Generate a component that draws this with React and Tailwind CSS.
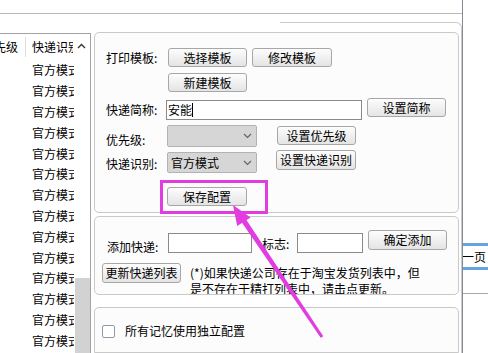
import React from "react";

const Btn = ({ className = "", children }) => (
  <div
    className={`flex items-center justify-center shrink-0 border border-[#a7a7a7] rounded-[3px] bg-linear-to-b from-[#fdfdfd] to-[#e4e4e4] whitespace-nowrap ${className}`}
  >
    {children}
  </div>
);

const Chevron = () => (
  <svg width="9" height="6" viewBox="0 0 9 6" className="shrink-0">
    <polyline points="1,1 4.5,4.5 8,1" fill="none" stroke="#606060" strokeWidth="1.1" />
  </svg>
);

const Select = ({ className = "", children }) => (
  <div
    className={`flex items-center justify-between shrink-0 border border-[#b3b3b3] rounded-[2px] bg-[#d6d6d6] pl-[3px] pr-[4px] ${className}`}
  >
    <span className="whitespace-nowrap">{children}</span>
    <Chevron />
  </div>
);

export default function App() {
  const rows = Array.from({ length: 14 });
  return (
    <div className="relative w-[488px] h-[353px] overflow-hidden bg-white text-[12px] leading-[14px] text-black font-['Noto_Sans_CJK_SC','Noto_Sans',sans-serif] flex">
      {/* main area */}
      <div className="w-[462px] h-full flex flex-col shrink-0">
        <div className="h-[14px] shrink-0 border-b border-[#b9b9b9]" />
        <div className="flex-1 flex min-h-0">
          {/* left list */}
          <div className="w-[91px] shrink-0 mt-[19px] border-t border-r border-[#a3a3a3] flex flex-col">
            <div className="h-[26px] shrink-0 flex items-center">
              <div className="w-[25px] shrink-0 overflow-hidden flex justify-end pr-[7px] whitespace-nowrap">
                <span className="shrink-0">优先级</span>
              </div>
              <div className="w-px h-[20px] bg-[#dcdcdc] shrink-0" />
              <div className="w-[47px] shrink-0 overflow-hidden whitespace-nowrap pl-[6px]">快递识别</div>
              <svg width="9" height="6" viewBox="0 0 9 6" className="ml-[4px] shrink-0 -mt-[2px]">
                <polyline points="1,5 4.5,1.5 8,5" fill="none" stroke="#303030" strokeWidth="1.3" />
              </svg>
            </div>
            <div className="flex-1 flex min-h-0">
              <div className="w-[75px] shrink-0 flex flex-col">
                {rows.map((_, i) => (
                  <div key={i} className="h-[20.8px] shrink-0 flex items-center">
                    <div className="w-[26px] shrink-0" />
                    <div className="w-[48px] overflow-hidden whitespace-nowrap pl-[6px]">官方模式</div>
                  </div>
                ))}
              </div>
              <div className="w-[15px] shrink-0 flex flex-col">
                <div className="mt-auto h-[75px] bg-[#d2d2d2]" />
              </div>
            </div>
          </div>

          {/* right panel */}
          <div className="flex-1 flex flex-col min-w-0">
            <div className="h-[8px] shrink-0" />
            <div className="ml-[189px] h-[10px] shrink-0 border-t border-r border-[#cacaca] rounded-tr-[6px]" />
            <div className="flex-1 border-r border-[#cacaca] pl-[3px] pr-[2px] flex flex-col">
              {/* group 1 */}
              <div className="h-[181px] shrink-0 border border-[#c9c9c9] rounded-[5px] bg-[#fcfcfc] flex flex-col">
                <div className="mt-[15px] h-[19px] flex items-center">
                  <div className="w-[73px] pl-[11px] shrink-0 whitespace-nowrap">打印模板:</div>
                  <Btn className="w-[79px] h-[19px]">选择模板</Btn>
                  <Btn className="w-[80px] h-[19px] ml-[5px]">修改模板</Btn>
                </div>
                <div className="mt-[6px] h-[19px] flex pl-[73px]">
                  <Btn className="w-[79px] h-[19px]">新建模板</Btn>
                </div>
                <div className="mt-[6px] h-[22px] flex items-start">
                  <div className="w-[71px] pl-[11px] shrink-0 mt-[5px] whitespace-nowrap">快递简称:</div>
                  <div className="w-[196px] h-[20px] mt-[2px] shrink-0 border border-[#8a8a8a] bg-white flex items-center pl-[1px]">
                    <span>安能</span>
                    <div className="w-px h-[14px] bg-black" />
                  </div>
                  <Btn className="w-[79px] h-[19px] ml-[5px]">设置简称</Btn>
                </div>
                <div className="mt-[5px] h-[22px] flex items-start">
                  <div className="w-[72px] pl-[11px] shrink-0 mt-[8px] whitespace-nowrap">优先级:</div>
                  <Select className="w-[90px] h-[22px]"></Select>
                  <Btn className="w-[79px] h-[19px] ml-[20px] mt-[1px]">设置优先级</Btn>
                </div>
                <div className="mt-[3px] h-[23px] flex items-start">
                  <div className="w-[72px] pl-[11px] shrink-0 mt-[7px] whitespace-nowrap">快递识别:</div>
                  <Select className="w-[90px] h-[21px] mt-[2px]">官方模式</Select>
                  <Btn className="w-[80px] h-[20px] ml-[19px]">设置快递识别</Btn>
                </div>
                <div className="mt-[14px] h-[19px] flex pl-[72px]">
                  <Btn className="w-[80px] h-[19px]">保存配置</Btn>
                </div>
              </div>

              {/* group 2 */}
              <div className="mt-[3px] h-[79px] shrink-0 border border-[#c9c9c9] rounded-[5px] bg-[#fcfcfc] overflow-hidden flex flex-col">
                <div className="mt-[13px] h-[23px] flex items-start shrink-0">
                  <div className="w-[73px] pl-[12px] shrink-0 mt-[10px] whitespace-nowrap">添加快递:</div>
                  <div className="w-[84px] h-[20px] mt-[3px] shrink-0 border border-[#8a8a8a] bg-white" />
                  <div className="w-[35px] ml-[10px] shrink-0 mt-[7px] whitespace-nowrap">标志:</div>
                  <div className="w-[66px] h-[20px] mt-[3px] shrink-0 border border-[#8a8a8a] bg-white" />
                  <Btn className="w-[79px] h-[20px] ml-[5px]">确定添加</Btn>
                </div>
                <div className="mt-[10px] flex items-start shrink-0">
                  <Btn className="w-[79px] h-[20px] ml-[7px]">更新快递列表</Btn>
                  <div className="ml-[9px] mt-[2px] leading-[16px] whitespace-nowrap">
                    <div>(*)如果快递公司存在于淘宝发货列表中，但</div>
                    <div>是不存在于精打列表中，请击点更新。</div>
                  </div>
                </div>
              </div>

              {/* group 3 */}
              <div className="mt-[12px] h-[46px] shrink-0 border border-[#c9c9c9] rounded-t-[5px] bg-[#fcfcfc] flex items-start">
                <div className="ml-[7px] mt-[17px] w-[13px] h-[13px] shrink-0 border border-[#8e9aaa] rounded-[2px] bg-white" />
                <div className="ml-[10px] mt-[16px] whitespace-nowrap">所有记忆使用独立配置</div>
              </div>
            </div>
          </div>
        </div>
      </div>

      {/* right strip */}
      <div className="flex-1 h-full border-l border-[#858b93] flex flex-col overflow-hidden">
        <div className="mt-[243px] h-[27px] shrink-0 border-y-[3px] border-[#66a3e2] flex items-center overflow-hidden whitespace-nowrap">
          <span className="-ml-[13px] shrink-0">下一页</span>
        </div>
        <div className="mt-[23px] border-t border-[#a8a8a8]" />
      </div>

      {/* annotation overlay */}
      <div className="absolute left-[160px] top-[180px] w-[108px] h-[34px] border-[3px] border-[#e03ce0] pointer-events-none" />
      <svg className="absolute left-0 top-0 pointer-events-none" width="488" height="353" viewBox="0 0 488 353">
        <polygon points="233,205 250.6,217.5 237.2,226.1" fill="#e03ce0" />
        <polygon points="246.1,219.6 241.9,222.4 320.7,337.8 323.3,336.2" fill="#e03ce0" />
      </svg>
    </div>
  );
}
